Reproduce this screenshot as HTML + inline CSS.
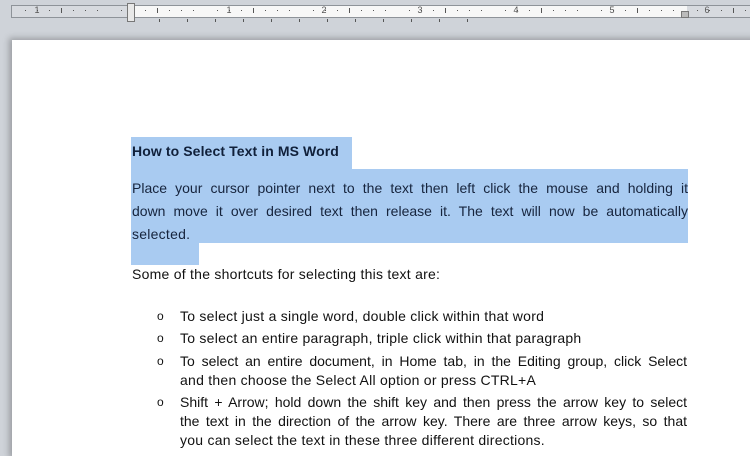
<!DOCTYPE html>
<html><head><meta charset="utf-8"><style>
*{margin:0;padding:0;box-sizing:border-box}
html,body{width:750px;height:456px;overflow:hidden}
body{background:#cfd3d9;font-family:"Liberation Sans",sans-serif;position:relative}
#ruler{position:absolute;left:11px;top:5px;width:745px;height:13px;background:#d7dadf;border:1px solid #8e9399}
#rw{position:absolute;left:120px;top:0;width:555px;height:11px;background:#f7f7f7}
.n{position:absolute;top:-1px;font-size:9px;color:#555;width:10px;margin-left:-5px;text-align:center}
.t{position:absolute;width:1px;background:#555}
.tab{position:absolute;top:19px;width:1px;height:3px;background:#555}
#page{position:absolute;left:12px;top:40px;width:760px;height:420px;background:#fff;box-shadow:-3px -2px 6px rgba(0,0,0,.25)}
.hl{position:absolute;background:#a9cbf1}
.l{position:absolute;font-size:14px;letter-spacing:0.25px;color:#111;white-space:nowrap}
.j{text-align:justify;text-align-last:justify;white-space:normal;letter-spacing:0}
.b{position:absolute;left:157px;font-size:12px;color:#111}
</style></head><body>
<div id="ruler"><div id="rw"></div>
<div class="n" style="left:25px">1</div>
<div class="n" style="left:217px">1</div>
<div class="n" style="left:312px">2</div>
<div class="n" style="left:408px">3</div>
<div class="n" style="left:504px">4</div>
<div class="n" style="left:600px">5</div>
<div class="n" style="left:695px">6</div>
</div>
<div id="ticks"></div>
<div style="position:absolute;left:127px;top:3px;width:8px;height:19px;border:1px solid #777;background:#e8e8e8"></div>
<div style="position:absolute;left:681px;top:11px;width:8px;height:7px;background:#bbb;border:1px solid #777"></div>
<script>
var r=document.getElementById('ruler'),h='';
for(var i=0;i<64;i++){var x=i*12+1; if(i%8==0)continue;
var len=(i%4==0)?5:1;h+='<div class="t" style="left:'+x+'px;top:'+(5-len/2|0)+'px;height:'+len+'px"></div>';}
r.insertAdjacentHTML('beforeend',h);
var t='';for(var k=0;k<12;k++){t+='<div class="tab" style="left:'+(159+k*28)+'px"></div>';}
document.getElementById('ticks').outerHTML=t;
</script>
<div id="page"></div>
<div class="hl" style="left:131px;top:137px;width:221px;height:32px"></div>
<div class="hl" style="left:131px;top:169px;width:557px;height:74px"></div>
<div class="hl" style="left:131px;top:243px;width:68px;height:22px"></div>
<div class="l" style="left:132px;top:143px;font-weight:bold;font-size:14px;letter-spacing:0.1px;color:#10203a">How to Select Text in MS Word</div>
<div class="l j" style="left:132px;top:180px;width:556px;color:#16243d">Place your cursor pointer next to the text then left click the mouse and holding it</div>
<div class="l j" style="left:132px;top:203px;width:556px;color:#16243d">down move it over desired text then release it. The text will now be automatically</div>
<div class="l" style="left:132px;top:226px;color:#16243d">selected.</div>
<div class="l" style="left:132px;top:266px">Some of the shortcuts for selecting this text are:</div>
<div class="b" style="top:309px">o</div><div class="l" style="left:180px;top:308px">To select just a single word, double click within that word</div>
<div class="b" style="top:331px">o</div><div class="l" style="left:180px;top:330px">To select an entire paragraph, triple click within that paragraph</div>
<div class="b" style="top:354px">o</div><div class="l j" style="left:180px;top:353px;width:507px">To select an entire document, in Home tab, in the Editing group, click Select</div>
<div class="l" style="left:180px;top:372px">and then choose the Select All option or press CTRL+A</div>
<div class="b" style="top:395px">o</div><div class="l j" style="left:180px;top:394px;width:507px">Shift + Arrow; hold down the shift key and then press the arrow key to select</div>
<div class="l j" style="left:180px;top:413px;width:507px">the text in the direction of the arrow key. There are three arrow keys, so that</div>
<div class="l" style="left:180px;top:432px">you can select the text in these three different directions.</div>
</body></html>
